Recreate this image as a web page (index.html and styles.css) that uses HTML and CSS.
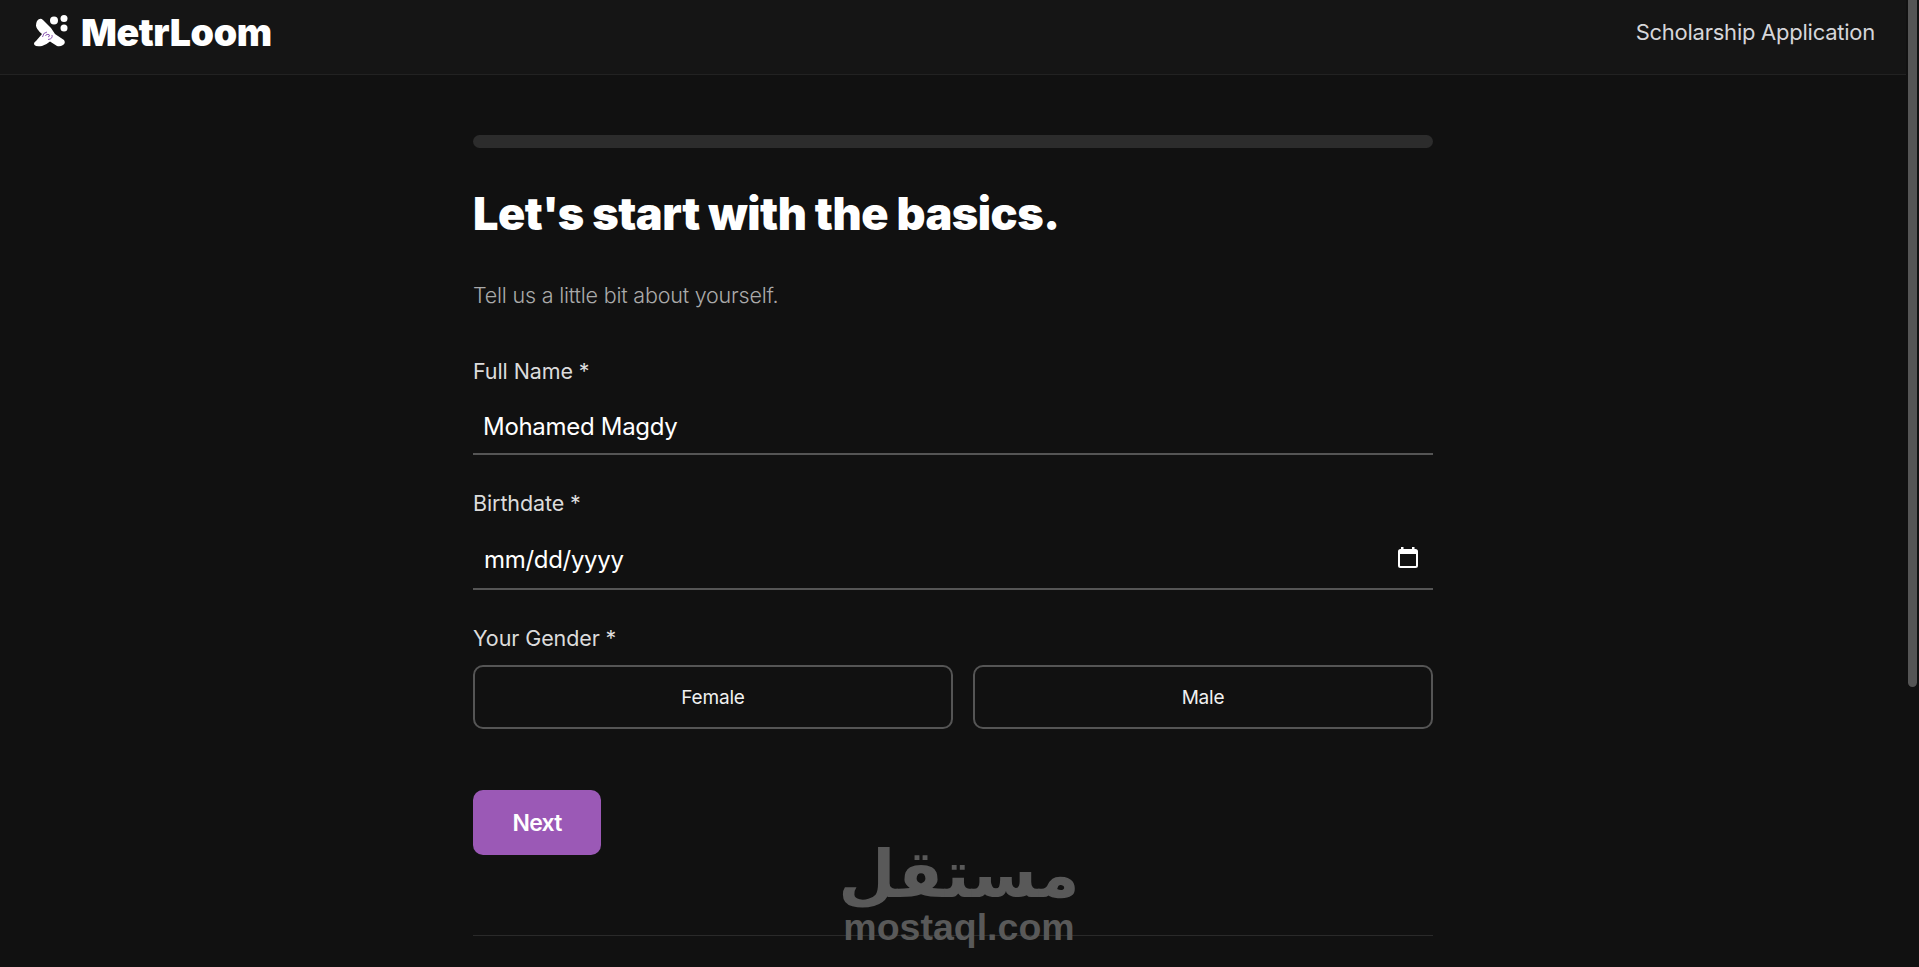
FILE: index.html
```html
<!doctype html>
<html lang="en">
	<head>
		<meta charset="utf-8">
		<title>MetrLoom - Scholarship Application</title>
		<link rel="stylesheet" href="styles.css">
	</head>
	<body>
		<div class="page">
			<header class="topbar">
				<div class="brand">
					<svg class="brand-icon" width="36" height="32" viewBox="0 0 36 32">
						<path d="M4 4 Q7 0 10 3 Q14 7 18 11 L22 17 L31 23 Q33 26 30 28 Q27 30 24 29 L17 24.500 Q13 28 9 29 Q3 30 1.500 28 Q0 26 3 24 L9 17 Q3 12 3 8.500 Q3 6 4 4 Z" fill="#fff"/>
						<circle cx="21" cy="3.500" r="4" fill="#fff"/>
						<circle cx="31" cy="1.500" r="3.500" fill="#fff"/>
						<circle cx="31" cy="11" r="3.500" fill="#fff"/>
						<path d="M9.500 20 Q10 15.500 14 15 M19 18 Q20 22 15 22.500 M12.500 19 Q13 16.500 16 17.500 Q17.500 19.500 15 20" fill="none" stroke="#8e5bb5" stroke-width="1"/>
					</svg>
					<span class="brand-name">MetrLoom</span>
				</div>
				<div class="topbar-title">Scholarship Application</div>
			</header>
			<main class="content">
				<div class="progress"></div>
				<h1 class="title">Let's start with the basics.</h1>
				<p class="subtitle">Tell us a little bit about yourself.</p>
				<div class="field">
					<label class="label">Full Name *</label>
					<div class="input">Mohamed Magdy</div>
				</div>
				<div class="field">
					<label class="label">Birthdate *</label>
					<div class="input input-date">
						<span>mm/dd/yyyy</span>
						<svg class="calendar" width="20" height="21" viewBox="0 0 20 21">
							<path d="M1 4.500 Q1 3 2.500 3 H17.500 Q19 3 19 4.500 V18.500 Q19 20 17.500 20 H2.500 Q1 20 1 18.500 Z" fill="none" stroke="#fff" stroke-width="2"/>
							<path d="M1 3 H19 V7 H1 Z M3 0 H5.500 V3 H3 Z M14 0 H16.500 V3 H14 Z" fill="#fff"/>
						</svg>
					</div>
				</div>
				<div class="field">
					<label class="label">Your Gender *</label>
					<div class="choices">
						<button class="choice">Female</button>
						<button class="choice">Male</button>
					</div>
				</div>
				<button class="next">Next</button>
				<hr class="divider">
			</main>
			<div class="watermark">
				<span class="watermark-ar" lang="ar" dir="rtl">مستقل</span>
				<span class="watermark-en">mostaql.com</span>
			</div>
		</div>
		<div class="scrollbar"><div class="scrollbar-thumb"></div></div>
	</body>
</html>
```

FILE: styles.css
```css
html, body {
	margin: 0px;
	height: 100%;
	overflow: hidden;
}
body {
	display: flex;
	background: #111;
	color: #fff;
	font-family: Inter, "Liberation Sans", sans-serif;
}
.page {
	position: relative;
	flex: 1;
	min-width: 0;
}
.topbar {
	display: flex;
	align-items: center;
	justify-content: space-between;
	height: 74px;
	padding: 0px 31px 0px 33px;
	background: #151515;
	border-bottom: 1px solid #222;
}
.brand {
	display: flex;
	align-items: center;
	gap: 12px;
	margin-bottom: 9px;
}
.brand-icon {
	overflow: visible;
}
.brand-name {
	font-size: 37.500px;
	font-weight: 900;
	letter-spacing: -0.4px;
}
.topbar-title {
	font-size: 22px;
	color: #d6d6da;
	letter-spacing: -0.25px;
	margin-bottom: 11px;
}
.content {
	width: 960px;
	margin: 0px auto;
	padding-top: 60px;
}
.progress {
	height: 13px;
	background: #2c2c2c;
	border-radius: 7px;
}
.title {
	margin: 39px 0px 0px;
	font-size: 45px;
	line-height: 54px;
	font-weight: 900;
	letter-spacing: -0.5px;
}
.subtitle {
	margin: 40px 0px 0px;
	font-size: 21.500px;
	line-height: 28px;
	font-weight: 300;
	color: #aaa;
	letter-spacing: -0.2px;
}
.field {
	margin-top: 34px;
}
.subtitle + .field {
	margin-top: 48px;
}
.label {
	display: block;
	font-size: 21.500px;
	line-height: 28px;
	color: #dcdcdc;
	letter-spacing: -0.1px;
}
.input {
	display: flex;
	align-items: center;
	justify-content: space-between;
	height: 56px;
	padding: 0px 15px 0px 10px;
	margin-top: 14px;
	box-sizing: border-box;
	border-bottom: 2px solid #555;
	font-size: 24px;
	letter-spacing: -0.3px;
}
.input-date {
	height: 59px;
	padding-left: 11px;
}
.calendar {
	margin-bottom: 4px;
}
.choices {
	display: grid;
	grid-template-columns: 480px 1fr;
	gap: 20px;
	margin-top: 13px;
}
.choice {
	height: 64px;
	background: transparent;
	border: 2px solid #555;
	border-radius: 10px;
	color: #f0f0f0;
	font-family: inherit;
	font-size: 19px;
	letter-spacing: -0.2px;
}
.next {
	display: block;
	width: 128px;
	height: 65px;
	margin-top: 61px;
	background: #9b59b6;
	border: 0px;
	border-radius: 10px;
	color: #fff;
	font-family: inherit;
	font-size: 23px;
	font-weight: 600;
	letter-spacing: -0.8px;
}
.divider {
	height: 1px;
	margin: 80px 0px 0px;
	border: 0px;
	background: #2a2a2a;
}
.watermark {
	position: absolute;
	left: 844px;
	top: 838px;
	width: 230px;
	display: flex;
	flex-direction: column;
	align-items: center;
	color: #595959;
	font-weight: 700;
}
.watermark-ar {
	font-family: "DejaVu Sans", sans-serif;
	font-size: 66px;
	line-height: 74px;
}
.watermark-en {
	font-family: "Liberation Sans", sans-serif;
	font-size: 37.500px;
	line-height: 30px;
}
.scrollbar {
	flex: none;
	width: 13px;
	padding-left: 2px;
	box-sizing: border-box;
}
.scrollbar-thumb {
	width: 9px;
	height: 687px;
	background: #555;
	border-radius: 0px 0px 5px 5px;
}
```
